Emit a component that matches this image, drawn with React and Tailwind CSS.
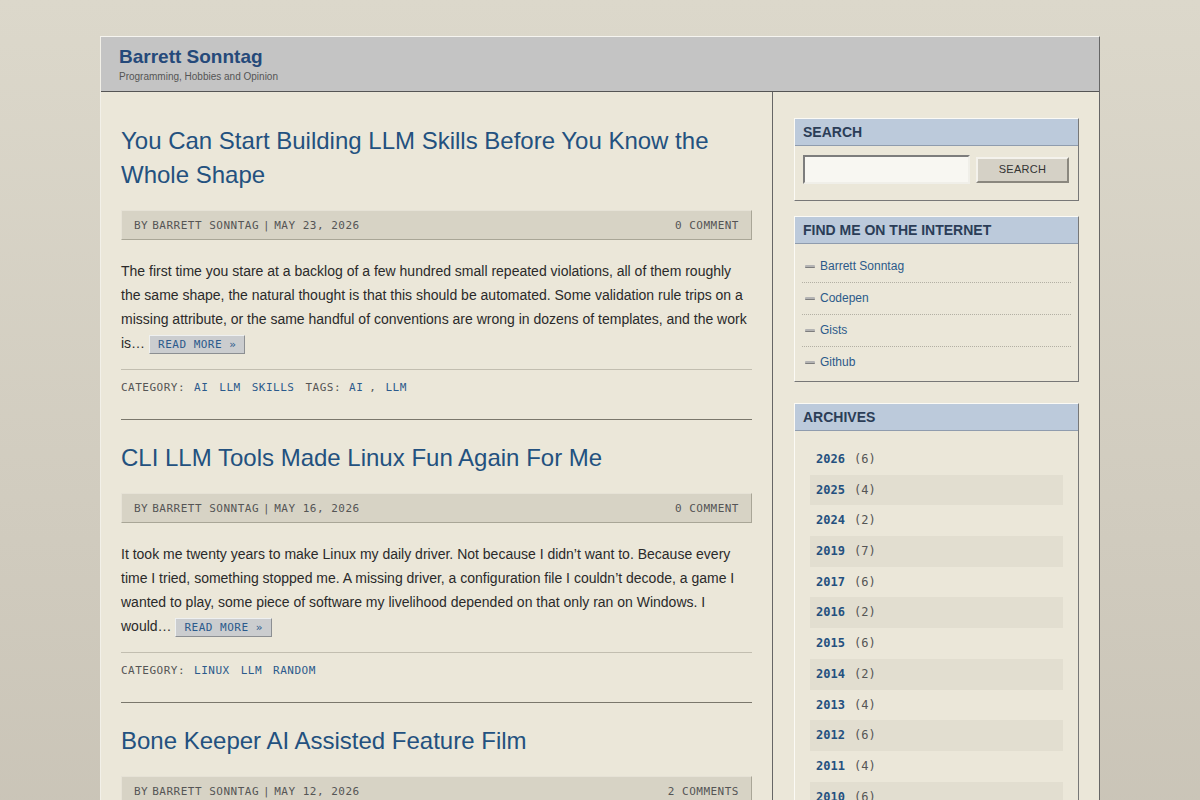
const posts = [
  {
    title: "You Can Start Building LLM Skills Before You Know the Whole Shape",
    date: "MAY 23, 2026",
    comments: "0 COMMENT",
    excerpt:
      "The first time you stare at a backlog of a few hundred small repeated violations, all of them roughly the same shape, the natural thought is that this should be automated. Some validation rule trips on a missing attribute, or the same handful of conventions are wrong in dozens of templates, and the work is…",
    categories: ["AI", "LLM", "SKILLS"],
    tags: ["AI", "LLM"],
  },
  {
    title: "CLI LLM Tools Made Linux Fun Again For Me",
    date: "MAY 16, 2026",
    comments: "0 COMMENT",
    excerpt:
      "It took me twenty years to make Linux my daily driver. Not because I didn’t want to. Because every time I tried, something stopped me. A missing driver, a configuration file I couldn’t decode, a game I wanted to play, some piece of software my livelihood depended on that only ran on Windows. I would…",
    categories: ["LINUX", "LLM", "RANDOM"],
    tags: [],
  },
  {
    title: "Bone Keeper AI Assisted Feature Film",
    date: "MAY 12, 2026",
    comments: "2 COMMENTS",
    excerpt:
      "A friend of mine has been working on a feature length film for a while now, and most of the heavy lifting on the visuals was done with a mix of traditional tools and newer generative ones. I got to watch a lot of it come together and wanted to write down what…",
    categories: ["AI", "FILM"],
    tags: [],
  },
];

const links = ["Barrett Sonntag", "Codepen", "Gists", "Github"];

const archives = [
  ["2026", 6],
  ["2025", 4],
  ["2024", 2],
  ["2019", 7],
  ["2017", 6],
  ["2016", 2],
  ["2015", 6],
  ["2014", 2],
  ["2013", 4],
  ["2012", 6],
  ["2011", 4],
  ["2010", 6],
  ["2009", 3],
];

const mono = "font-['DejaVu_Sans_Mono',monospace]";

function Post({ post }) {
  return (
    <div className="pt-[21px] first:pt-0">
      <h2 className="text-[24px] leading-[34px] text-[#23517f]">{post.title}</h2>
      <div
        className={`${mono} mt-[18px] flex h-[30px] items-center justify-between border border-t-[#e6e2d6] border-l-[#e6e2d6] border-r-[#a9a697] border-b-[#a9a697] bg-[#d7d3c5] pt-[2px] pl-[12px] pr-[12px] text-[11px] tracking-[0.5px] text-[#555]`}
      >
        <span className="flex gap-[4px]">
          <span>BY</span>
          <span>BARRETT SONNTAG</span>
          <span>|</span>
          <span>{post.date}</span>
        </span>
        <span>{post.comments}</span>
      </div>
      <p className="mt-[19px] text-[14px] leading-[24px] text-[#2a2a2a]">
        {post.excerpt}{" "}
        <a
          href="#"
          className={`${mono} inline-block border border-t-[#eef0f0] border-l-[#eef0f0] border-r-[#8c8f92] border-b-[#8c8f92] bg-[#cbcdcf] px-[8px] align-middle text-[11px] leading-[17px] tracking-[0.5px] text-[#2b5a8c]`}
        >
          READ MORE »
        </a>
      </p>
      <div className="mt-[14px] border-t border-[#c2beb0]" />
      <div
        className={`${mono} flex h-[49px] items-start gap-[9px] pt-[10px] text-[11px] leading-[16px] tracking-[0.5px] text-[#555]`}
      >
        <span>CATEGORY:</span>
        {post.categories.map((c) => (
          <a key={c} href="#" className="mr-[2px] text-[#2b5a8c]">
            {c}
          </a>
        ))}
        {post.tags.length > 0 && <span className="mr-[-1px]">TAGS:</span>}
        {post.tags.map((t, i) => (
          <span key={t} className="flex gap-[9px]">
            {i > 0 && <span className="ml-[-3px]">,</span>}
            <a href="#" className="text-[#2b5a8c]">
              {t}
            </a>
          </span>
        ))}
      </div>
      <div className="border-t border-[#7a776c]" />
    </div>
  );
}

function Widget({ title, children, className = "" }) {
  return (
    <div
      className={`border border-t-[#fbfaf5] border-l-[#fbfaf5] border-r-[#777] border-b-[#777] ${className}`}
    >
      <div className="h-[27px] border-b border-[#8f9cae] bg-[#bccadb] pl-[8px] text-[14px] font-bold leading-[27px] text-[#2b3d57]">
        {title}
      </div>
      {children}
    </div>
  );
}

export default function App() {
  return (
    <div className="min-h-screen bg-linear-to-b from-[#dcd8cb] to-[#c5bfb2] pt-[36px] pb-10 font-['Liberation_Sans',Arial,sans-serif]">
      <div className="mx-auto w-[1000px] border-t border-l border-r border-t-[#f6f5f0] border-l-[#f2f0e8] border-r-[#666] bg-[#ebe7d9]">
        <div className="h-[55px] border-b border-[#555] bg-[#c4c4c4] pl-[18px] pt-[9px]">
          <h1 className="text-[19px] font-bold leading-[22px] text-[#25497a]">Barrett Sonntag</h1>
          <div className="mt-[2px] text-[10px] leading-[13px] text-[#555]">
            Programming, Hobbies and Opinion
          </div>
        </div>
        <div className="flex">
          <main className="w-[672px] shrink-0 border-r border-[#666] px-[20px] pt-[32px] pb-10">
            {posts.map((p) => (
              <Post key={p.title} post={p} />
            ))}
          </main>
          <aside className="flex-1 pl-[21px] pr-[20px] pt-[26px]">
            <Widget title="SEARCH">
              <div className="flex items-center gap-[6px] px-[8px] pt-[9px] pb-[16px]">
                <input
                  className="h-[29px] w-[167px] border-2 border-t-[#7d7d7d] border-l-[#7d7d7d] border-r-[#f0efe9] border-b-[#f0efe9] bg-[#f8f7f2] outline-none"
                  type="text"
                />
                <button className="h-[26px] w-[93px] border-2 border-t-[#f4f2ec] border-l-[#f4f2ec] border-r-[#8a877e] border-b-[#8a877e] bg-[#d5d1c6] text-[11px] tracking-[0.3px] text-[#333]">
                  SEARCH
                </button>
              </div>
            </Widget>
            <Widget title="FIND ME ON THE INTERNET" className="mt-[15px]">
              <ul className="px-[7px] pt-[7px] pb-[3px]">
                {links.map((l) => (
                  <li
                    key={l}
                    className="flex items-center gap-[5px] border-b border-dotted border-[#b3b0a4] py-[9px] pl-[3px] leading-[13px] last:border-b-0"
                  >
                    <span className="inline-block h-[3px] w-[10px] rounded-[1px] border-b border-[#7d7d7d] bg-[#b4b4b4]" />
                    <a href="#" className="text-[12px] text-[#2b5a8a]">
                      {l}
                    </a>
                  </li>
                ))}
              </ul>
            </Widget>
            <Widget title="ARCHIVES" className="mt-[21px]">
              <ul className={`${mono} px-[15px] pt-[13px] pb-[12px] text-[12px]`}>
                {archives.map(([y, n], i) => (
                  <li
                    key={y}
                    className={`h-[30.7px] pl-[6px] leading-[30.7px] ${i % 2 === 1 ? "bg-[#e2ded0]" : ""}`}
                  >
                    <a href="#" className="font-bold text-[#24507f]">
                      {y}
                    </a>
                    <span className="ml-[9px] text-[#555]">({n})</span>
                  </li>
                ))}
              </ul>
            </Widget>
          </aside>
        </div>
      </div>
    </div>
  );
}
